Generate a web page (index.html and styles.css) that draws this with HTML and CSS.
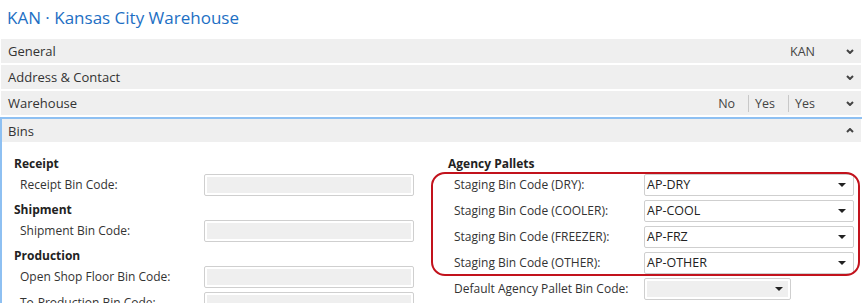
FILE: index.html
```html
<!DOCTYPE html>
<html lang="en">
<head>
    <meta charset="UTF-8">
    <title>KAN · Kansas City Warehouse</title>
    <link rel="stylesheet" href="styles.css">
</head>
<body>
    <h1 class="page-title">KAN · Kansas City Warehouse</h1>

    <div class="fasttab">
        <div class="fasttab-header">
            <span class="fasttab-name">General</span>
            <span class="fasttab-summary"><span class="summary-item">KAN</span></span>
            <svg class="chevron" width="8" height="5" viewBox="0 0 8 5"><polyline points="1,1 4,4 7,1"/></svg>
        </div>
    </div>
    <div class="fasttab">
        <div class="fasttab-header">
            <span class="fasttab-name">Address &amp; Contact</span>
            <svg class="chevron" width="8" height="5" viewBox="0 0 8 5"><polyline points="1,1 4,4 7,1"/></svg>
        </div>
    </div>
    <div class="fasttab">
        <div class="fasttab-header">
            <span class="fasttab-name">Warehouse</span>
            <span class="fasttab-summary">
                <span class="summary-item">No</span>
                <span class="summary-item sep">Yes</span>
                <span class="summary-item sep">Yes</span>
            </span>
            <svg class="chevron" width="8" height="5" viewBox="0 0 8 5"><polyline points="1,1 4,4 7,1"/></svg>
        </div>
    </div>

    <div class="fasttab open">
        <div class="fasttab-header">
            <span class="fasttab-name">Bins</span>
            <svg class="chevron" width="8" height="5" viewBox="0 0 8 5"><polyline points="1,4 4,1 7,4"/></svg>
        </div>
        <div class="fasttab-body">
            <div class="group-col">
                <div class="group-title">Receipt</div>
                <div class="field">
                    <label>Receipt Bin Code:</label>
                    <div class="input empty"></div>
                </div>
                <div class="group-title">Shipment</div>
                <div class="field">
                    <label>Shipment Bin Code:</label>
                    <div class="input empty"></div>
                </div>
                <div class="group-title">Production</div>
                <div class="field">
                    <label>Open Shop Floor Bin Code:</label>
                    <div class="input empty"></div>
                </div>
                <div class="field">
                    <label>To-Production Bin Code:</label>
                    <div class="input empty"></div>
                </div>
            </div>
            <div class="group-col right">
                <div class="group-title">Agency Pallets</div>
                <div class="field">
                    <label>Staging Bin Code (DRY):</label>
                    <div class="input select">AP-DRY<span class="arrow"></span></div>
                </div>
                <div class="field">
                    <label>Staging Bin Code (COOLER):</label>
                    <div class="input select">AP-COOL<span class="arrow"></span></div>
                </div>
                <div class="field">
                    <label>Staging Bin Code (FREEZER):</label>
                    <div class="input select">AP-FRZ<span class="arrow"></span></div>
                </div>
                <div class="field">
                    <label>Staging Bin Code (OTHER):</label>
                    <div class="input select">AP-OTHER<span class="arrow"></span></div>
                </div>
                <div class="field">
                    <label>Default Agency Pallet Bin Code:</label>
                    <div class="input select empty short"><span class="arrow"></span></div>
                </div>
            </div>
            <!-- highlight drawn over the staging fields -->
            <div class="highlight"></div>
        </div>
    </div>
</body>
</html>
```

FILE: styles.css
```css
html, body {
    height: 303px;
    overflow: hidden;
}

body {
    margin: 0;
    padding: 0;
    background-color: #fff;
    font-family: "Open Sans", "Liberation Sans", sans-serif;
    color: #333;
}

.page-title {
    margin: 0;
    height: 39px;
    padding-left: 7px;
    font-size: 17px;
    font-weight: normal;
    line-height: 36px;
    color: #1d6fc4;
}

.fasttab {
    margin: 0 1px 2px 1px;
}

.fasttab-header {
    display: flex;
    align-items: center;
    height: 24px;
    padding: 0 7px 0 7px;
    background-color: #efefef;
    font-size: 13px;
}

.fasttab-name {
    flex: 1;
}

.fasttab-summary {
    display: flex;
    align-items: center;
    margin-right: 31px;
    font-size: 12.5px;
    color: #444;
}

.summary-item.sep {
    margin-left: 13px;
    padding-left: 6px;
    border-left: 1px solid #c8c8c8;
    line-height: 17px;
}

.chevron {
    display: block;
}

.chevron polyline {
    fill: none;
    stroke: #444;
    stroke-width: 2;
}

.fasttab.open {
    margin: 0;
    border-top: 2px solid #8ec0f2;
    border-left: 2px solid #8ec0f2;
}

.fasttab.open .fasttab-header {
    height: 23px;
    padding-left: 6px;
    margin-right: 1px;
}

.fasttab-body {
    position: relative;
    display: grid;
    grid-template-columns: 432px 1fr;
    padding-top: 12px;
    background-color: #fff;
}

.group-col {
    padding-left: 12px;
}

.group-col.right {
    padding-left: 14px;
}

.group-title {
    height: 20px;
    line-height: 20px;
    font-size: 12px;
    font-weight: bold;
    color: #222;
}

.field {
    display: grid;
    grid-template-columns: 190px 210px;
    height: 26px;
    font-size: 12px;
}

.right .field {
    grid-template-columns: 196px 210px;
}

.field label {
    padding-left: 6px;
    line-height: 22px;
    color: #333;
    white-space: nowrap;
}

.input {
    box-sizing: border-box;
    height: 22px;
    border: 1px solid #cfcfcf;
    border-radius: 2px;
    background-color: #fff;
}

.input.empty {
    padding: 2px;
    background-color: #efefef;
    background-clip: content-box;
}

.input.select {
    position: relative;
    padding-left: 2px;
    line-height: 20px;
    font-size: 12.5px;
    color: #222;
}

.input.select.empty {
    padding: 2px;
}

.input.short {
    width: 147px;
}

.arrow {
    position: absolute;
    right: 7px;
    top: 8px;
    width: 0;
    height: 0;
    border-left: 4px solid transparent;
    border-right: 4px solid transparent;
    border-top: 4px solid #222;
}

.highlight {
    position: absolute;
    left: 429px;
    top: 30px;
    width: 425px;
    height: 100px;
    border: 2px solid #c2121c;
    border-radius: 14px;
}
```
